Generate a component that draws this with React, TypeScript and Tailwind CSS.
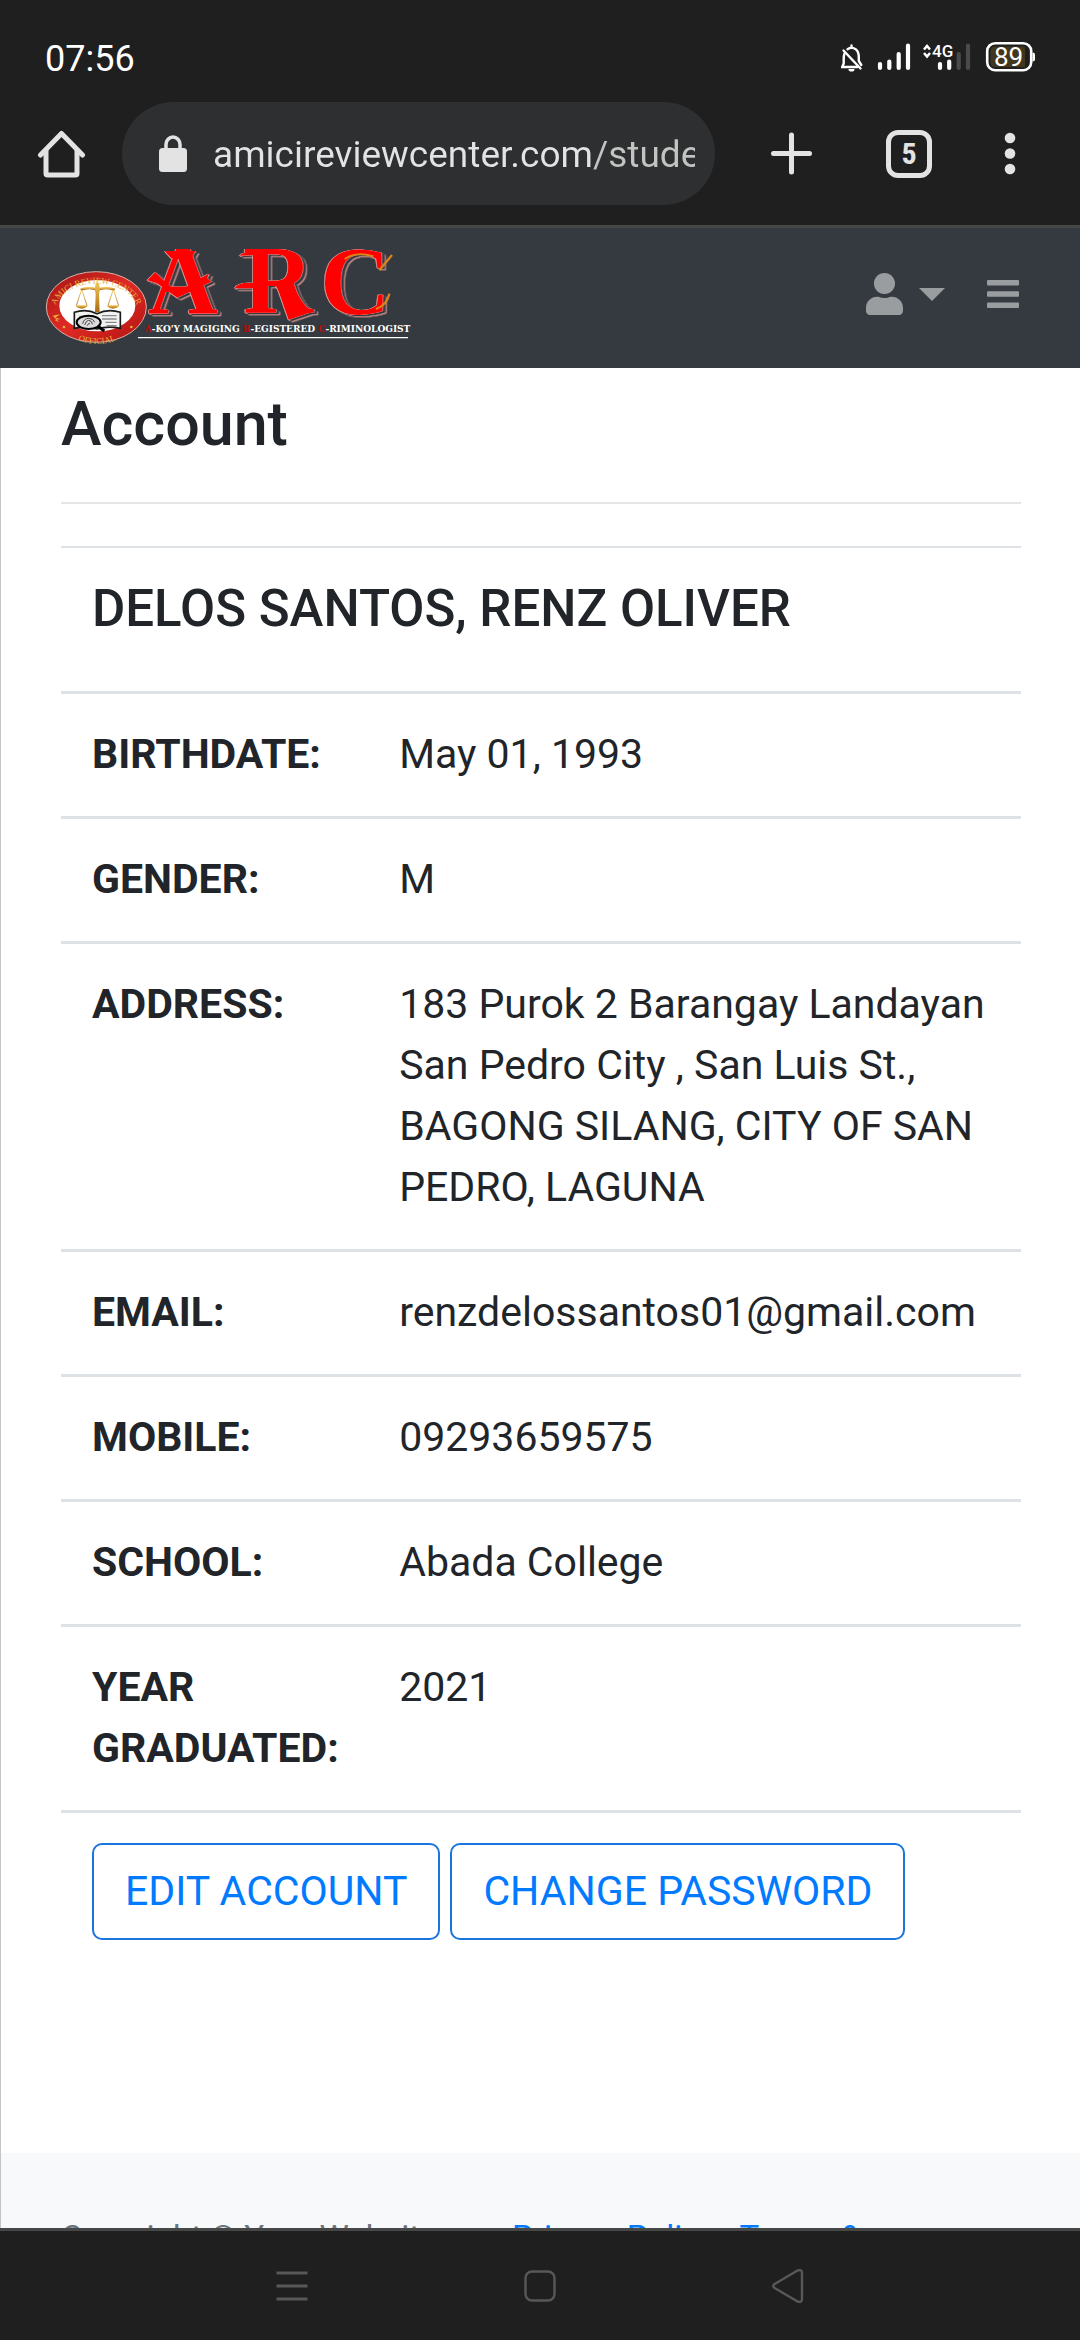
import React from "react";

const details = [
  { label: "BIRTHDATE:", value: "May 01, 1993" },
  { label: "GENDER:", value: "M" },
  {
    label: "ADDRESS:",
    value:
      "183 Purok 2 Barangay Landayan San Pedro City , San Luis St., BAGONG SILANG, CITY OF SAN PEDRO, LAGUNA",
  },
  { label: "EMAIL:", value: "renzdelossantos01@gmail.com" },
  { label: "MOBILE:", value: "09293659575" },
  { label: "SCHOOL:", value: "Abada College" },
  { label: "YEAR GRADUATED:", value: "2021" },
];

function StatusBar() {
  return (
    <div className="flex h-[102px] items-center justify-between pt-3 pr-[45px] pl-[45px]">
      <time className="pt-1 text-[36px] leading-10 text-white">07:56</time>
      <svg width="194" height="32" viewBox="841 41 194 32" fill="none" aria-label="Notifications muted, signal, 4G, battery 89 percent">
        <g stroke="#fff" strokeWidth="2.4" strokeLinecap="round">
          <path d="M844.5 53.5c-.7 1.600-.8 3.200-.8 6v4l-1.500 3.500h15" />
          <path d="M847.500 49.200c2.200-1.400 6-1.700 8.400.2 2.600 2 2.900 4.800 2.900 8.100v3.500l2.500 4" />
          <path d="M843.500 50.500l17 18M851.500 45.500v1.500" />
        </g>
        <path d="M848.500 69h6a3 2.600 0 0 1-6 0z" fill="#fff" />
        <g stroke="#fff" strokeWidth="4.200" strokeLinecap="round">
          <path d="M880 64v4M889.300 61.500v6.500M898.700 54v14M908 45.500v22.500M940 64v4M949.200 61.500v6.500" />
          <path d="M958.700 54v14M968 45.500v22.500" stroke="#4a4a4a" />
        </g>
        <path d="M924 49.500l3-3.500 3 3.500M924 53l3 3.500 3-3.500" stroke="#fff" strokeWidth="2.500" />
        <text x="932" y="57" fill="#fff" fontSize="17" fontWeight="500" fontFamily="Liberation Sans Narrow, Roboto, sans-serif">4G</text>
        <rect x="987.200" y="43.200" width="44" height="27" rx="8" fill="#1f1f1f" stroke="#fff" strokeWidth="2.600" />
        <path d="M995 46.500h30v20.500h-30q-4.500 0-4.500-5v-10.500q0-5 4.500-5z" fill="#43361f" />
        <path d="M1032.500 52.500q2.500 0 2.500 2v5q0 2-2.500 2z" fill="#fff" />
        <text x="994" y="66" fill="#fff" fontSize="26" fontFamily="Roboto, sans-serif">89</text>
      </svg>
    </div>
  );
}

function BrowserBar() {
  return (
    <div className="flex h-[126px] items-start border-b-3 border-[#464646] pr-16 pl-[37px] text-[#e3e3e3]">
      <button type="button" aria-label="Home" className="mt-7 mr-9">
        <svg width="49" height="49" viewBox="0 0 49 49" fill="none" stroke="currentColor" strokeWidth="5" strokeLinejoin="round" strokeLinecap="round">
          <path d="M3.500 25L24.500 3.500 45.500 25" />
          <path d="M9 21v22.500q0 1.500 1.500 1.500h28q1.500 0 1.500-1.500V21" />
        </svg>
      </button>
      <label className="flex h-[103px] min-w-0 flex-1 items-center rounded-full bg-[#2d2f31] pr-5 pl-9">
        <svg width="30" height="38" viewBox="0 0 30 38" className="mr-[25px] shrink-0" fill="none" aria-hidden="true">
          <rect x="1" y="13" width="28" height="24" rx="3.500" fill="#e3e3e3" />
          <path d="M8 14V9.500a7 7.500 0 0 1 14 0V14" stroke="#e3e3e3" strokeWidth="3.500" />
        </svg>
        <input
          aria-label="Address"
          readOnly
          value="amicireviewcenter.com/student"
          className="h-14 w-full min-w-0 bg-[linear-gradient(90deg,#e3e3e3_379px,#c2c4c2_379px)] bg-clip-text pt-0.5 text-[37px] leading-[54px] text-transparent outline-none"
        />
      </label>
      <button type="button" aria-label="New tab" className="mt-[30px] ml-14">
        <svg width="41" height="43" viewBox="0 0 41 43" stroke="currentColor" strokeWidth="5" strokeLinecap="round">
          <path d="M20.500 3v37M2.500 21.500h36" />
        </svg>
      </button>
      <button type="button" aria-label="5 open tabs" className="mt-7 ml-[74px] flex h-12 w-[46px] items-center justify-center rounded-xl border-5 border-current font-['Roboto_Condensed','Liberation_Sans_Narrow',Roboto,sans-serif] text-[30px] leading-8 font-bold">
        5
      </button>
      <button type="button" aria-label="Menu" className="mt-[30px] ml-[72px]">
        <svg width="12" height="43" viewBox="0 0 12 43" fill="currentColor">
          <circle cx="6" cy="6" r="5.300" />
          <circle cx="6" cy="21.500" r="5.300" />
          <circle cx="6" cy="37" r="5.300" />
        </svg>
      </button>
    </div>
  );
}

function Logo() {
  return (
    <svg width="364" height="96" viewBox="48 63 1092 288" className="overflow-visible" role="img" aria-label="ARC">
      <defs>
        <linearGradient id="gold" x1="0" x2="0" y1="0" y2="1">
          <stop offset="0" stopColor="#f2c65a" />
          <stop offset="1" stopColor="#a86a12" />
        </linearGradient>
        <linearGradient id="ring" x1="0" x2="1" y1="0" y2="1">
          <stop offset="0" stopColor="#a31515" />
          <stop offset=".5" stopColor="#e02a24" />
          <stop offset="1" stopColor="#b01412" />
        </linearGradient>
        <path id="ringTop" d="M76 270A124 84 0 1 1 322 270" />
        <path id="ringBottom" d="M90 296A118 92 0 0 0 312 296" />
      </defs>
      <ellipse cx="199" cy="246" rx="150" ry="106" fill="url(#ring)" stroke="#d9b0a8" strokeWidth="3" />
      <ellipse cx="202" cy="242" rx="114" ry="77" fill="#fff" />
      <g fill="#e7b23c" fontFamily="Liberation Serif, serif" fontSize="26">
        <text>
          <textPath href="#ringTop" startOffset="50%" textAnchor="middle">AMICI REVIEW CENTER</textPath>
        </text>
        <text>
          <textPath href="#ringBottom" startOffset="50%" textAnchor="middle">OFFICIAL</textPath>
        </text>
      </g>
      <g fill="#e7b23c">
        <path d="M68 272l22-4-14 10 16 4-18 3 14 7z" />
        <circle cx="102" cy="306" r="4" />
        <circle cx="304" cy="306" r="4" />
      </g>
      <path d="M133 262q36-12 68 4 34-16 70-4v48q-36-8-70 2-32-10-68-2z" fill="#f2f2f2" stroke="#1a1a1a" strokeWidth="5" />
      <path d="M148 274h40M148 284h20M216 272h44M216 282h44M226 292h34M230 302h30" stroke="#8a8a8a" strokeWidth="4" />
      <g fill="none" stroke="url(#gold)">
        <path d="M152 194q26-10 50 0 26-10 52 0" strokeWidth="7" />
        <path d="M154 196l-15 46M156 196l15 46M249 196l-15 46M251 196l15 46" strokeWidth="2.500" />
      </g>
      <path d="M197 176q5-8 10 0l3 16-3 16 2 54h-14l2-54-3-16z" fill="url(#gold)" />
      <path d="M136 241h38q-6 10-19 10t-19-10zM230 241h38q-6 10-19 10t-19-10z" fill="url(#gold)" />
      <ellipse cx="176" cy="292" rx="36" ry="20" fill="#dcdcdc" stroke="#000" strokeWidth="6" />
      <path d="M158 296q4-16 18-16t18 12M164 300q4-14 12-14t12 12M172 302q2-8 8-6" stroke="#444" strokeWidth="3" fill="none" />
      <path d="M203 303l20 15" stroke="#000" strokeWidth="9" />
      <g
        className="[filter:drop-shadow(1px_0_0_#f3b4b0)_drop-shadow(-2px_0_0_#f3b4b0)_drop-shadow(8px_4px_0_#343a40)_drop-shadow(3px_3px_0_#e79c98)]"
        fill="#fe0000"
        fontFamily="Liberation Serif, serif"
        fontWeight="bold"
        fontSize="290"
      >
        <text x="354" y="264">A</text>
        <text x="640" y="264">R</text>
        <text x="871" y="267">C</text>
        <path d="M404 78h92l-12 22h-60z" />
        <path d="M376 142l20 20 46 38 62-36 32-18-4 14 12 10-102 48-62-44-28-8z" />
        <path d="M614 190q10-20 60-16v16z" />
        <path d="M628 92q14-12 50-14v12z" />
        <path d="M738 176l52-6q18 66 58 90l-72 24z" />
      </g>
      <path d="M944 102q34-24 86-8" fill="none" stroke="#d98318" strokeWidth="6" />
      <path d="M1086 90l-38 46M1078 206q-6 34-40 46" fill="none" stroke="#d98318" strokeWidth="7" />
      <text x="344" y="320" fill="#fff" fontFamily="DejaVu Serif, serif" fontWeight="bold" fontSize="27">
        <tspan fill="#c00808">A</tspan>-KO&apos;Y MAGIGING <tspan fill="#c00808">R</tspan>-EGISTERED <tspan fill="#c00808">C</tspan>-RIMINOLOGIST
      </text>
      <path d="M324 338h810" stroke="#fff" strokeWidth="3.500" />
    </svg>
  );
}

function SiteNavbar() {
  return (
    <header className="flex items-center justify-between bg-[#343a40] pt-[18px] pr-[61px] pb-[26px] pl-[46px] text-[#9a9da0]">
      <a href="#home" aria-label="ARC home">
        <Logo />
      </a>
      <div className="flex items-center gap-[42px]">
        <button type="button" aria-label="Account menu" className="flex items-center gap-4">
          <svg width="37" height="42" viewBox="0 0 448 512" preserveAspectRatio="none" fill="currentColor">
            <path d="M224 256c70.700 0 128-57.300 128-128S294.700 0 224 0 96 57.300 96 128s57.300 128 128 128zm89.600 32h-16.700c-22.200 10.200-46.900 16-72.900 16s-50.600-5.800-72.900-16h-16.700C60.200 288 0 348.200 0 422.400V464c0 26.500 21.500 48 48 48h352c26.500 0 48-21.500 48-48v-41.600c0-74.200-60.200-134.400-134.400-134.400z" />
          </svg>
          <svg width="26" height="13" viewBox="0 0 26 13" fill="currentColor">
            <path d="M0 0h26L13 13z" />
          </svg>
        </button>
        <button type="button" aria-label="Toggle navigation">
          <svg width="32" height="28" viewBox="0 0 32 28" fill="currentColor">
            <rect width="32" height="5.500" rx="1" />
            <rect y="11.200" width="32" height="5.500" rx="1" />
            <rect y="22.500" width="32" height="5.500" rx="1" />
          </svg>
        </button>
      </div>
    </header>
  );
}

function AccountPage() {
  return (
    <main className="shrink-0 pt-5 pr-[59px] pb-[183px] pl-[60px] text-[#212529]">
      <h1 className="text-[61px] leading-[73px] font-medium">Account</h1>
      <hr className="mt-[41px] mb-[42px] border-t-2 border-[#e5e5e5]" />
      <table className="w-full table-fixed border-collapse text-left text-[41px] leading-[61px]">
        <colgroup>
          <col className="w-[32%]" />
          <col />
        </colgroup>
        <thead>
          <tr className="border-t-2 border-[#dee2e6]">
            <th colSpan={2} className="px-[31px] pt-[30px] pb-[52px] text-[51px] font-medium">
              DELOS SANTOS, RENZ OLIVER
            </th>
          </tr>
        </thead>
        <tbody>
          {details.map((row) => (
            <tr key={row.label} className="border-t-3 border-[#dee2e6] align-top">
              <th scope="row" className="pt-[30px] pr-5 pb-[31px] pl-[31px] font-bold">{row.label}</th>
              <td className="pt-[30px] pr-5 pb-[31px] pl-[31px]">{row.value}</td>
            </tr>
          ))}
          <tr className="border-t-3 border-[#dee2e6]">
            <td colSpan={2} className="px-[31px] py-[30px]">
              <div className="flex gap-[10px] text-[#007bff]">
                <button type="button" className="rounded-[10px] border-2 border-[#1a75dc] px-[31px] py-4">EDIT ACCOUNT</button>
                <button type="button" className="rounded-[10px] border-2 border-[#1a75dc] px-[31px] py-4">CHANGE PASSWORD</button>
              </div>
            </td>
          </tr>
        </tbody>
      </table>
    </main>
  );
}

function SiteFooter() {
  return (
    <footer className="flex shrink-0 items-start justify-between bg-[#f8f9fa] px-[60px] pt-[60px] pb-[61px] text-[33px] leading-[49px] text-[#6c757d]">
      <div className="w-[400px]">Copyright © Your Website 2020</div>
      <div className="w-[508px]">
        <a href="#privacy" className="text-[#007bff]">Privacy Policy</a> · <a href="#terms" className="text-[#007bff]">Terms &amp; Conditions</a>
      </div>
    </footer>
  );
}

function SystemNav() {
  return (
    <nav aria-label="System" className="flex h-28 shrink-0 items-center justify-center gap-[214px] border-t-3 border-[#464848] bg-[#1f1f1f] text-[#585858]">
      <button type="button" aria-label="Recent apps">
        <svg width="34" height="34" viewBox="0 0 34 34" stroke="currentColor" strokeWidth="2.800">
          <path d="M1.500 4h31M1.500 17h31M1.500 30h31" />
        </svg>
      </button>
      <button type="button" aria-label="Home screen">
        <svg width="34" height="34" viewBox="0 0 34 34" fill="none" stroke="currentColor" strokeWidth="2.400">
          <rect x="2.500" y="2.500" width="29" height="29" rx="6.500" />
        </svg>
      </button>
      <button type="button" aria-label="Back">
        <svg width="34" height="36" viewBox="0 0 34 36" fill="none" stroke="currentColor" strokeWidth="2.400" strokeLinejoin="round">
          <path d="M3.200 16.300L26.500 2.500q4.500-1.500 4.500 2.500v26q0 4-4.500 2.500L3.200 19.700q-2-1.700 0-3.400z" />
        </svg>
      </button>
    </nav>
  );
}

export default function App() {
  return (
    <div className="flex h-screen flex-col overflow-hidden bg-[#1f1f1f] font-[Roboto,sans-serif]">
      <StatusBar />
      <BrowserBar />
      <div className="flex min-h-0 flex-1 flex-col overflow-hidden bg-white">
        <SiteNavbar />
        <div className="flex flex-col border-l border-[#c4c4c6]">
          <AccountPage />
          <SiteFooter />
        </div>
      </div>
      <SystemNav />
    </div>
  );
}
